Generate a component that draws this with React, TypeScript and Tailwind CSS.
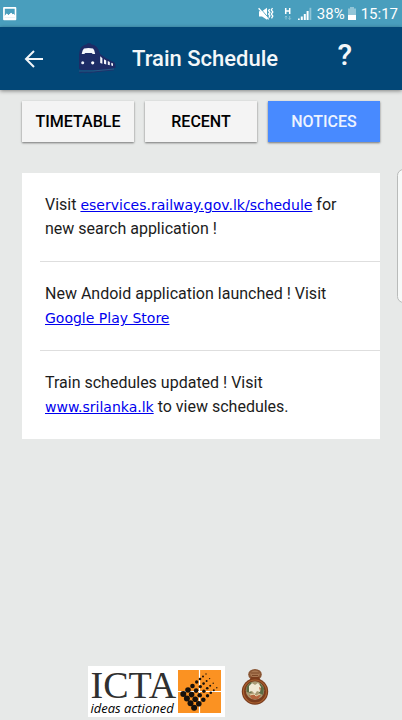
import type { ReactNode } from "react";

function StatusBar() {
  return (
    <div className="flex h-[27px] items-center justify-between bg-[#499ebd] pr-1 pl-[3px] text-white">
      <svg width="14" height="14" viewBox="0 0 14 14" role="img" aria-label="Screenshot saved">
        <path
          fill="#fff"
          fillRule="evenodd"
          d="M1 0h11.4a.9.9 0 0 1 .9.9v11.4a.9.9 0 0 1-.9.9H1a.9.9 0 0 1-.9-.9V.9A.9.9 0 0 1 1 0Zm.8 1.8v8.4h9.9V1.8ZM1.8 10.6V9.2l2-2.4 1.6 1.5L8.2 6l1.6 1.7.8-.7 1.1 1.4v2.2Z"
        />
        <path fill="#fff" d="M1.6 10.6V9l2.2-2.4 1.6 1.6L8.2 5.8l1.6 1.7.8-.7 1.3 1.6v2.2Z" />
      </svg>
      <div className="flex items-center">
        <svg width="16" height="14" viewBox="0 0 16 14" role="img" aria-label="Vibrate">
          <path fill="#fff" d="M1 4.3h3L9 .8v12L4 9.4H1Z" />
          <path d="M1.6.6l9 10.4" stroke="#499ebd" strokeWidth="1" />
          <path d="M.6 1.2l10 11.2" stroke="#fff" strokeWidth="1.3" />
          <path d="M11.6 2l-1 1.6 1.3 1.7-1.3 1.7 1.3 1.8-1 1.8M14.5 1l-1.2 1.9 1.5 2-1.5 2.1 1.5 2.1-1.3 2.2" fill="none" stroke="#fff" strokeWidth="1.3" />
        </svg>
        <svg className="ml-[10px]" width="8" height="14" viewBox="0 0 8 14" role="img" aria-label="Mobile data">
          <path d="M1.7 1v6M5.7 1v6M1.2 4h4.3" stroke="#fff" strokeWidth="1.5" />
          <path d="M2 12.5V9M.8 10.2 2 9l1.2 1.2M5.7 9v3.5M4.5 11.3l1.2 1.2 1.2-1.2" fill="none" stroke="#8fc4d7" strokeWidth="1" />
        </svg>
        <svg className="ml-[6px]" width="14" height="14" viewBox="0 0 14 14" role="img" aria-label="Signal">
          <path fill="#fff" d="M0 11.5h1.7V13H0zM2.8 9.5h2V13h-2zM5.8 7h2v6h-2zM8.6 4h2v9h-2z" />
          <path fill="#8fc4d7" d="M11.5.8h1.8V13h-1.8z" />
        </svg>
        <span className="ml-[5px] font-[Roboto] text-[15px] leading-6">38%</span>
        <svg className="ml-[2px]" width="10" height="14" viewBox="0 0 10 14" role="img" aria-label="Battery">
          <path fill="#92c5d7" d="M3 0h4v1.5h2V9H1V1.5h2Z" />
          <path fill="#fff" d="M1 8h8v5H1Z" />
        </svg>
        <span className="ml-1 font-[Roboto] text-[15px] leading-6">15:17</span>
      </div>
    </div>
  );
}

function TrainLogo() {
  return (
    <svg className="ml-[33px]" width="40" height="34" viewBox="0 0 40 34" aria-hidden="true">
      <path
        fill="#1d2c66"
        d="M2 26.5V13Q2.300 7 5 4.400 7.500 2.700 9.800 2.300L10.500 1.200h3l.8 1.100q3.500.5 5.500 2.700 2.400 3 3.400 7l6 4.300 8 3.900q1.200.8 1.200 2.800v3l-10 1.500-9 .5H4Z"
      />
      <path fill="#f4f7fb" d="M7 6.600Q11.500 5.600 16 6.600q1.300 1 2.200 5.400h-2.400l-1.200-1H8.400l-1.200 1H4.700Q5.400 7.800 7 6.600Z" />
      <circle cx="5.700" cy="20.800" r="1.500" fill="#e9f0f7" />
      <circle cx="15.700" cy="20.800" r="1.600" fill="#fff" />
      <path fill="#f4f7fb" d="m23.200 14.200 2.200 2v5.600l-2.200-.8zM27 17.300l2.200 1.300v3.900l-2.200-.7zM30.800 19l2 1v3.300l-2-.6zM34.300 20.700l1.700.8v2.400l-1.700-.5z" />
      <path d="M2 30.200h13l22-2.400M3 31.500l2-2M8 31.500l2-2M13 31.500l2-2M18 30.500l2-2M23 30l2-2" fill="none" stroke="#1f336b" strokeWidth="1" />
      <path d="M2 29h14l21-2" stroke="#43668f" strokeWidth=".6" fill="none" />
    </svg>
  );
}

function Header() {
  return (
    <header className="relative flex h-[63px] items-center bg-[#024777] pr-[50px] pl-6 text-[#f4f7f9] shadow-[0_1px_4px_rgba(0,0,0,0.45)]">
      <button type="button" aria-label="Back" className="block">
        <svg width="20" height="20" viewBox="0 0 20 20" fill="none" stroke="#f1f5f8" strokeWidth="2">
          <path d="M19 10H2.500M10 2 2 10l8 8" />
        </svg>
      </button>
      <TrainLogo />
      <h1 className="ml-[15px] flex-1 font-[Roboto] text-[22px] leading-7 font-medium whitespace-nowrap">Train Schedule</h1>
      <button type="button" aria-label="Help" className="-mt-2 block font-[Roboto] text-[30px] leading-9 font-medium">
        ?
      </button>
    </header>
  );
}

const tabs = ["TIMETABLE", "RECENT", "NOTICES"];

function Tabs() {
  return (
    <nav className="grid grid-cols-3 gap-[11px]">
      {tabs.map((tab) => (
        <button
          key={tab}
          type="button"
          className={
            "h-[41px] font-[Roboto] text-base font-medium shadow-[0_1px_2px_rgba(0,0,0,0.5)] " +
            (tab === "NOTICES" ? "bg-[#488aff] text-[#edf3ff]" : "bg-[#f4f4f4] text-black")
          }
        >
          {tab}
        </button>
      ))}
    </nav>
  );
}

function NoticeLink({ children }: { children: ReactNode }) {
  return (
    <a href="#notice" className="font-['DejaVu_Sans'] text-sm leading-5 text-[#0000ee] underline">
      {children}
    </a>
  );
}

function Notice({ children }: { children: ReactNode }) {
  return (
    <li className="border-b border-[#dedede] py-5 pr-4 pl-[5px] last:border-b-0">
      <p className="leading-6">{children}</p>
    </li>
  );
}

const dotColumns = [
  { x: 5.3, y: 24, r: 3 },
  { x: 10, y: 20, r: 2.8 },
  { x: 14.5, y: 16, r: 2.3 },
  { x: 18.7, y: 12, r: 1.7 },
  { x: 22, y: 9, r: 1.3 },
  { x: 25, y: 6.500, r: 1 },
  { x: 28, y: 4, r: 0.7 },
];

function IctaLogo() {
  return (
    <div className="flex h-[51px] items-start bg-white pt-1 pr-1 pl-[3px]">
      <div className="flex w-[87px] flex-col text-[#303030]">
        <span className="font-['Liberation_Serif'] text-[38px] leading-[30px] whitespace-nowrap">ICTA</span>
        <span className="font-['Open_Sans'] text-[13px] leading-4 font-medium whitespace-nowrap text-black italic">
          ideas actioned
        </span>
      </div>
      <svg width="43" height="43" viewBox="0 0 43 43" aria-hidden="true">
        <path fill="#fb9222" d="M0 0h43v43H0z" />
        <path d="M21.500 0v43M0 21.500h43" stroke="#fff" strokeWidth="1.200" />
        {dotColumns.flatMap((dot) =>
          [0, 1, 2, 3].map((row) => (
            <circle key={`${dot.x}-${row}`} cx={dot.x + row * 3.6} cy={dot.y + row * 4.6} r={dot.r} fill="#17110c" />
          )),
        )}
      </svg>
    </div>
  );
}

function Emblem() {
  return (
    <svg width="28" height="38" viewBox="0 0 28 38" role="img" aria-label="Railway emblem">
      <ellipse cx="14" cy="6.500" rx="6.800" ry="5.500" fill="#8a5634" />
      <ellipse cx="14" cy="6" rx="4.800" ry="3.600" fill="#a87751" />
      <path d="M10 5h8M11 7.500h6" stroke="#7c4829" />
      <path fill="#7b3b1b" d="M10 9h8l2 5H8Z" />
      <circle cx="14" cy="23.500" r="13.200" fill="#7a3c1d" />
      <circle cx="14" cy="23.500" r="11.500" fill="none" stroke="#a9602f" strokeWidth="1.200" />
      <circle cx="14" cy="22.500" r="9.200" fill="#a99a74" />
      <path fill="#5d6b43" d="M5.500 19l4-5 3 2-3 4 1 5-5-1ZM19 15l4 5-1 7-4-2Z" />
      <path fill="#f0e9d4" d="m8 18 3-3 3 2 3-2 3 4-1 5-3-1-2 3-3-3-3 1Z" />
      <path fill="#b5663f" d="M8 27h12l-3 4h-6ZM18 19l2 1-1 3Z" />
      <path d="m9 27 4-1 2 2 4-2" stroke="#e6d5ac" fill="none" />
    </svg>
  );
}

export default function App() {
  return (
    <div className="relative flex min-h-screen flex-col overflow-hidden bg-[#e7e9e8] font-[Roboto] text-base text-[#1c1c1c]">
      <StatusBar />
      <Header />
      <main className="flex-1 px-[22px] pt-[11px]">
        <Tabs />
        <ul className="mt-[31px] bg-white pl-[18px]">
          <Notice>
            Visit <NoticeLink>eservices.railway.gov.lk/schedule</NoticeLink> for new search application !
          </Notice>
          <Notice>
            New Andoid application launched ! Visit <NoticeLink>Google Play Store</NoticeLink>
          </Notice>
          <Notice>
            Train schedules updated ! Visit <NoticeLink>www.srilanka.lk</NoticeLink> to view schedules.
          </Notice>
        </ul>
      </main>
      <footer className="flex items-start justify-center gap-4 pr-[46px] pb-[3px]">
        <IctaLogo />
        <div className="pt-[2px]">
          <Emblem />
        </div>
      </footer>
      <div className="absolute top-[169px] -right-2 h-[134px] w-[13px] rounded-lg border border-[#b9bbba] bg-[#f7f9f8]" />
    </div>
  );
}
